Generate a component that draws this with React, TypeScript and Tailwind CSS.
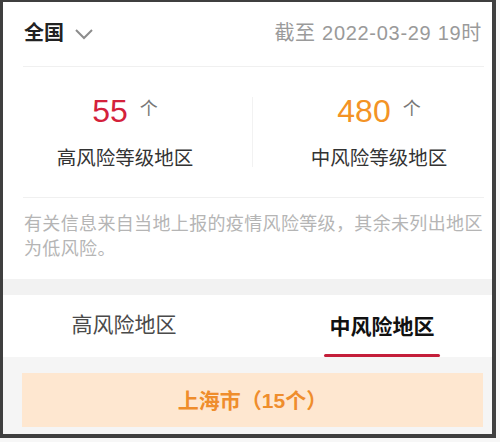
import React from "react";

const font = { fontFamily: '"Liberation Sans", "Noto Sans CJK SC", sans-serif' };

export default function App() {
  return (
    <div className="w-[500px] h-[442px] bg-[#f7f7f7]" style={font}>
      <div className="w-[496px] h-[438px] border-t-2 border-l-[3px] border-r-4 border-b-4 border-[#3f3f3f] bg-white overflow-hidden flex flex-col">
        {/* header */}
        <div className="h-[64px] flex items-center justify-between pl-[21px] pr-[10px] pb-[3px]">
          <div className="flex items-center">
            <span className="text-[20px] font-bold text-[#222] leading-none">全国</span>
            <svg width="20" height="12" viewBox="0 0 20 12" className="ml-[10px] mt-[2px]">
              <path d="M2 2 L10 10 L18 2" fill="none" stroke="#8c8c8c" strokeWidth="2" />
            </svg>
          </div>
          <span className="text-[20px] text-[#9a9a9a] leading-none tracking-[0.7px]">截至 2022-03-29 19时</span>
        </div>
        <div className="ml-[20px] mr-[8px] h-px bg-[#f0f0f0]" />
        {/* stats */}
        <div className="h-[130px] flex items-center">
          <div className="w-[244px] flex flex-col items-center">
            <div className="flex items-center">
              <span className="text-[32px] text-[#d4213b] leading-none">55</span>
              <span className="text-[18px] text-[#777] ml-[12px] leading-none mt-[-4px]">个</span>
            </div>
            <span className="mt-[22px] text-[19.5px] text-[#333] leading-none">高风险等级地区</span>
          </div>
          <div className="w-[10px] flex justify-center">
            <div className="w-px h-[70px] bg-[#f2f2f2]" />
          </div>
          <div className="w-[235px] pl-[9px] flex flex-col items-center">
            <div className="flex items-center">
              <span className="text-[32px] text-[#f39325] leading-none">480</span>
              <span className="text-[18px] text-[#777] ml-[12px] leading-none mt-[-4px]">个</span>
            </div>
            <span className="mt-[22px] text-[19.5px] text-[#333] leading-none">中风险等级地区</span>
          </div>
        </div>
        <div className="ml-[20px] mr-[8px] h-px bg-[#f0f0f0]" />
        {/* notice */}
        <div className="h-[81px] pl-[21px] pr-[8px] pt-[14px]">
          <p className="text-[18px] leading-[25px] text-[#b5b5b5] tracking-[0.35px]">
            有关信息来自当地上报的疫情风险等级，其余未列出地区为低风险。
          </p>
        </div>
        <div className="h-[16px] bg-[#f2f2f2]" />
        {/* tabs */}
        <div className="h-[62px] flex pl-[21px] gap-[58px]">
          <div className="w-[200px] flex flex-col items-center justify-center">
            <span className="text-[21px] text-[#4a4a4a] leading-none mt-[-3px]">高风险地区</span>
          </div>
          <div className="w-[200px] flex flex-col items-center justify-end">
            <span className="text-[21px] font-bold text-[#111] leading-none">中风险地区</span>
            <div className="mt-[17px] w-[116px] h-[3px] rounded-full bg-[#c41e3a]" />
          </div>
        </div>
        {/* list */}
        <div className="flex-1 bg-[#f5f5f5] pt-[16px] pl-[19px] pr-[9px]">
          <div className="h-[54px] bg-[#fee7d0] flex items-center justify-center">
            <span className="text-[21px] font-bold text-[#ef8d2c] leading-none">上海市（15个）</span>
          </div>
        </div>
      </div>
    </div>
  );
}
